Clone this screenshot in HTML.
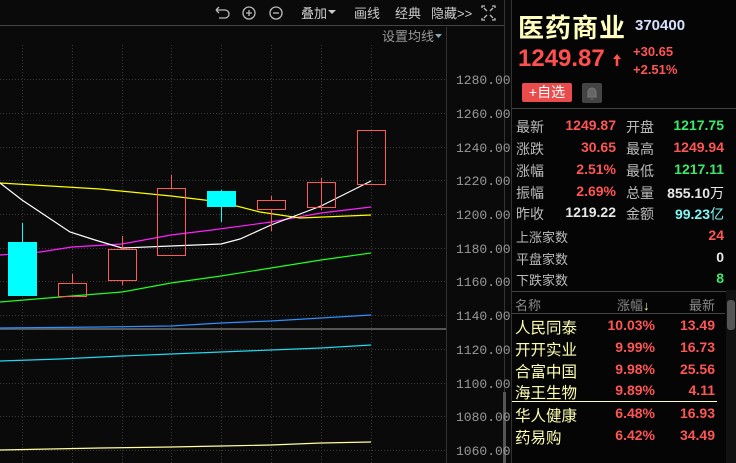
<!DOCTYPE html>
<html><head><meta charset="utf-8"><style>
*{margin:0;padding:0;box-sizing:border-box}
body{width:736px;height:463px;background:#0a0a0a;overflow:hidden;position:relative;font-family:"Liberation Sans","Noto Sans CJK SC",sans-serif;color:#ccc}
.a{position:absolute;white-space:nowrap}
.r{text-align:right}
.red{color:#ff5555}.grn{color:#3ee86a}.wht{color:#e8e8e8}.cy{color:#7ef6f6}
.lab{font-size:14px;color:#bbb}
.v{font-size:14px;font-weight:bold;font-family:"Liberation Sans",sans-serif}
.nm{font-size:15.5px;color:#ffffb0}
</style></head><body>
<svg class="a" style="left:0;top:0" width="512" height="463" xmlns="http://www.w3.org/2000/svg">
<rect width="512" height="463" fill="#0a0a0a"/>
<line x1="0" y1="25.5" x2="504" y2="25.5" stroke="#444"/>
<line x1="504.5" y1="0" x2="504.5" y2="463" stroke="#333"/>
<line x1="446.5" y1="27" x2="446.5" y2="463" stroke="#333"/>
<rect x="503" y="392" width="3" height="71" fill="#555"/>
<g stroke="#3a3a3a" stroke-dasharray="1,2">
<line x1="0" x2="446" y1="79.5" y2="79.5"/><line x1="0" x2="446" y1="113.5" y2="113.5"/>
<line x1="0" x2="446" y1="147.5" y2="147.5"/><line x1="0" x2="446" y1="180.5" y2="180.5"/>
<line x1="0" x2="446" y1="214.5" y2="214.5"/><line x1="0" x2="446" y1="248.5" y2="248.5"/>
<line x1="0" x2="446" y1="281.5" y2="281.5"/><line x1="0" x2="446" y1="315.5" y2="315.5"/>
<line x1="0" x2="446" y1="349.5" y2="349.5"/><line x1="0" x2="446" y1="383.5" y2="383.5"/>
<line x1="0" x2="446" y1="416.5" y2="416.5"/><line x1="0" x2="446" y1="450.5" y2="450.5"/>
<line y1="45" y2="463" x1="22.5" x2="22.5"/><line y1="45" y2="463" x1="72.5" x2="72.5"/>
<line y1="45" y2="463" x1="122.5" x2="122.5"/><line y1="45" y2="463" x1="171.5" x2="171.5"/>
<line y1="45" y2="463" x1="221.5" x2="221.5"/><line y1="45" y2="463" x1="271.5" x2="271.5"/>
<line y1="45" y2="463" x1="321.5" x2="321.5"/><line y1="45" y2="463" x1="371.5" x2="371.5"/>
</g>
<g font-family="Liberation Mono,monospace" font-size="13" fill="#999">
<text x="456" y="84">1280.00</text><text x="456" y="118">1260.00</text><text x="456" y="152">1240.00</text>
<text x="456" y="185">1220.00</text><text x="456" y="219">1200.00</text><text x="456" y="253">1180.00</text>
<text x="456" y="286">1160.00</text><text x="456" y="320">1140.00</text><text x="456" y="354">1120.00</text>
<text x="456" y="388">1100.00</text><text x="456" y="421">1080.00</text><text x="456" y="455">1060.00</text>
</g>
<rect x="0" y="328" width="446" height="2" fill="#555"/>
<g fill="none" stroke-width="1.2">
<polyline stroke="#ffffa0" points="0,450 100,448 171,447 221,446 271,445 321,443 371,442"/>
<polyline stroke="#20d8f0" points="0,361 60,359 122,356 171,354 221,352 271,350 321,348 371,345"/>
<polyline stroke="#2e8fff" points="0,328 100,327 171,326 221,323 271,321 321,318 371,315"/>
<polyline stroke="#20ff20" points="0,302 72,296 122,292 171,283 221,276 271,268 321,260 371,253"/>
<polyline stroke="#ff20ff" points="0,255 40,252 72,247 122,244 171,235 212,230 271,222 321,213 371,207"/>
<polyline stroke="#ffff00" points="0,183 100,189 171,196 221,202 260,212 300,218 371,215"/>
<polyline stroke="#ffffff" points="0,183 22,200 70,232 95,240 122,248 171,246 221,244 240,239 271,225 321,206 371,181"/>
</g>
<g stroke="#ff5a5a" fill="none">
<line x1="72.5" y1="274" x2="72.5" y2="283"/><rect x="58.5" y="283.5" width="28" height="13"/>
<line x1="122.5" y1="236" x2="122.5" y2="285"/><rect x="108.5" y="249.5" width="28" height="31" fill="#0a0a0a"/>
<line x1="171.5" y1="175" x2="171.5" y2="188"/><rect x="157.5" y="188.5" width="28" height="67"/>
<line x1="271.5" y1="196" x2="271.5" y2="231"/><rect x="257.5" y="200.5" width="28" height="9" fill="#0a0a0a"/>
<line x1="321.5" y1="178" x2="321.5" y2="210"/><rect x="307.5" y="182.5" width="28" height="25"/>
<rect x="357.5" y="130.5" width="28" height="54"/>
</g>
<line x1="22.5" y1="223" x2="22.5" y2="242" stroke="#00ffff"/><rect x="8" y="242" width="29" height="54" fill="#00ffff"/>
<line x1="221.5" y1="190" x2="221.5" y2="222" stroke="#00ffff"/><rect x="207" y="191" width="29" height="16" fill="#00ffff"/>
<g fill="none" stroke="#bbb" stroke-width="1.3">
<path d="M216 10 h9 a4 4 0 0 1 0 8 h-6"/><path d="M216 10 l3 -3 M216 10 l3 3"/>
<circle cx="249" cy="13" r="6"/><path d="M246 13h6M249 10v6"/>
<circle cx="276" cy="13" r="6"/><path d="M273 13h6"/>
<path d="M482 8v-2h3 M492 6h3v2 M482 18v2h3 M492 20h3v-2 M484 8l3 3 M493 8l-3 3 M484 18l3-3 M493 18l-3-3"/>
</g>
<g font-size="13" fill="#ccc" font-family="Liberation Sans,Noto Sans CJK SC,sans-serif">
<text x="301" y="18">叠加</text><path d="M328 10h8l-4 4z" fill="#ccc"/>
<text x="354" y="18">画线</text><text x="395" y="18">经典</text><text x="431" y="18">隐藏&gt;&gt;</text>
<text x="382" y="41" fill="#999">设置均线</text><path d="M435 34h7l-3.5 4z" fill="#8ab"/>
</g>
</svg>
<div class="a" style="left:511px;top:0;width:1px;height:463px;background:#333"></div>
<div class="a" style="left:512px;top:0;width:224px;height:463px;background:#050505"></div>
<div class="a" style="left:518px;top:8px;font-size:26px;font-weight:bold;color:#ffffc0;letter-spacing:1px">医药商业</div>
<div class="a" style="left:635px;top:17px;font-size:15px;font-weight:bold;color:#d8e0ff">370400</div>
<div class="a" style="left:518px;top:45px;font-size:24px;font-weight:bold;color:#ff4f4f">1249.87</div>
<svg class="a" style="left:612px;top:53px" width="10" height="14"><path d="M5 1 L9 6 H6.3 V13 H3.7 V6 H1 Z" fill="#ff4f4f"/></svg>
<div class="a" style="left:633px;top:44px;font-size:13px;font-weight:bold;color:#ff5555">+30.65</div>
<div class="a" style="left:633px;top:62px;font-size:13px;font-weight:bold;color:#ff5555">+2.51%</div>
<div class="a" style="left:522px;top:83px;width:50px;height:19px;background:#e84c4c;color:#fff;font-size:14px;text-align:center;line-height:19px;border-radius:2px">+自选</div>
<div class="a" style="left:582px;top:83px;width:20px;height:20px;background:#444;border-radius:2px"></div>
<svg class="a" style="left:582px;top:83px" width="20" height="20"><path d="M6 14 V9 a4 4 0 0 1 8 0 V14 Z M5 14h10 M9 16h2" stroke="#777" fill="#666"/></svg>
<div class="a" style="left:512px;top:108px;width:224px;height:1px;background:#444"></div>
<div class="a lab" style="left:516px;top:117px">最新</div><div class="a v red r" style="left:540px;width:76px;top:117px">1249.87</div>
<div class="a lab" style="left:626px;top:117px">开盘</div><div class="a v grn r" style="left:650px;width:74px;top:117px">1217.75</div>
<div class="a lab" style="left:516px;top:139px">涨跌</div><div class="a v red r" style="left:540px;width:76px;top:139px">30.65</div>
<div class="a lab" style="left:626px;top:139px">最高</div><div class="a v red r" style="left:650px;width:74px;top:139px">1249.94</div>
<div class="a lab" style="left:516px;top:161px">涨幅</div><div class="a v red r" style="left:540px;width:76px;top:161px">2.51%</div>
<div class="a lab" style="left:626px;top:161px">最低</div><div class="a v grn r" style="left:650px;width:74px;top:161px">1217.11</div>
<div class="a lab" style="left:516px;top:183px">振幅</div><div class="a v red r" style="left:540px;width:76px;top:183px">2.69%</div>
<div class="a lab" style="left:626px;top:183px">总量</div><div class="a v wht r" style="left:650px;width:74px;top:183px">855.10<span style="font-weight:normal">万</span></div>
<div class="a lab" style="left:516px;top:204px">昨收</div><div class="a v wht r" style="left:540px;width:76px;top:204px">1219.22</div>
<div class="a lab" style="left:626px;top:204px">金额</div><div class="a v cy r" style="left:650px;width:74px;top:204px">99.23<span style="font-weight:normal">亿</span></div>
<div class="a lab" style="left:516px;top:227px;font-size:13px">上涨家数</div><div class="a v red r" style="left:650px;width:74px;top:227px">24</div>
<div class="a lab" style="left:516px;top:249px;font-size:13px">平盘家数</div><div class="a v wht r" style="left:650px;width:74px;top:249px">0</div>
<div class="a lab" style="left:516px;top:270px;font-size:13px">下跌家数</div><div class="a v grn r" style="left:650px;width:74px;top:270px">8</div>
<div class="a" style="left:512px;top:291px;width:224px;height:1px;background:#444"></div>
<div class="a" style="left:515px;top:295px;font-size:13px;color:#888">名称</div>
<div class="a" style="left:617px;top:295px;font-size:13px;color:#888">涨幅<span style="color:#ffffb0">↓</span></div>
<div class="a r" style="left:670px;width:45px;top:295px;font-size:13px;color:#888">最新</div>
<div class="a" style="left:512px;top:313px;width:213px;height:1px;background:#444"></div>
<div class="a" style="left:726px;top:290px;width:10px;height:173px;background:#111"></div>
<div class="a" style="left:727px;top:300px;width:8px;height:30px;background:#555;border-radius:3px"></div>
<div class="a nm" style="left:515px;top:316px">人民同泰</div><div class="a v red r" style="left:590px;width:65px;top:317px">10.03%</div><div class="a v red r" style="left:660px;width:55px;top:317px">13.49</div>
<div class="a nm" style="left:515px;top:338px">开开实业</div><div class="a v red r" style="left:590px;width:65px;top:339px">9.99%</div><div class="a v red r" style="left:660px;width:55px;top:339px">16.73</div>
<div class="a nm" style="left:515px;top:360px">合富中国</div><div class="a v red r" style="left:590px;width:65px;top:361px">9.98%</div><div class="a v red r" style="left:660px;width:55px;top:361px">25.56</div>
<div class="a nm" style="left:515px;top:381px">海王生物</div><div class="a v red r" style="left:590px;width:65px;top:382px">9.89%</div><div class="a v red r" style="left:660px;width:55px;top:382px">4.11</div>
<div class="a" style="left:512px;top:401px;width:205px;height:1px;background:#ffffb0"></div>
<div class="a nm" style="left:515px;top:404px">华人健康</div><div class="a v red r" style="left:590px;width:65px;top:405px">6.48%</div><div class="a v red r" style="left:660px;width:55px;top:405px">16.93</div>
<div class="a nm" style="left:515px;top:426px">药易购</div><div class="a v red r" style="left:590px;width:65px;top:427px">6.42%</div><div class="a v red r" style="left:660px;width:55px;top:427px">34.49</div>
</body></html>
